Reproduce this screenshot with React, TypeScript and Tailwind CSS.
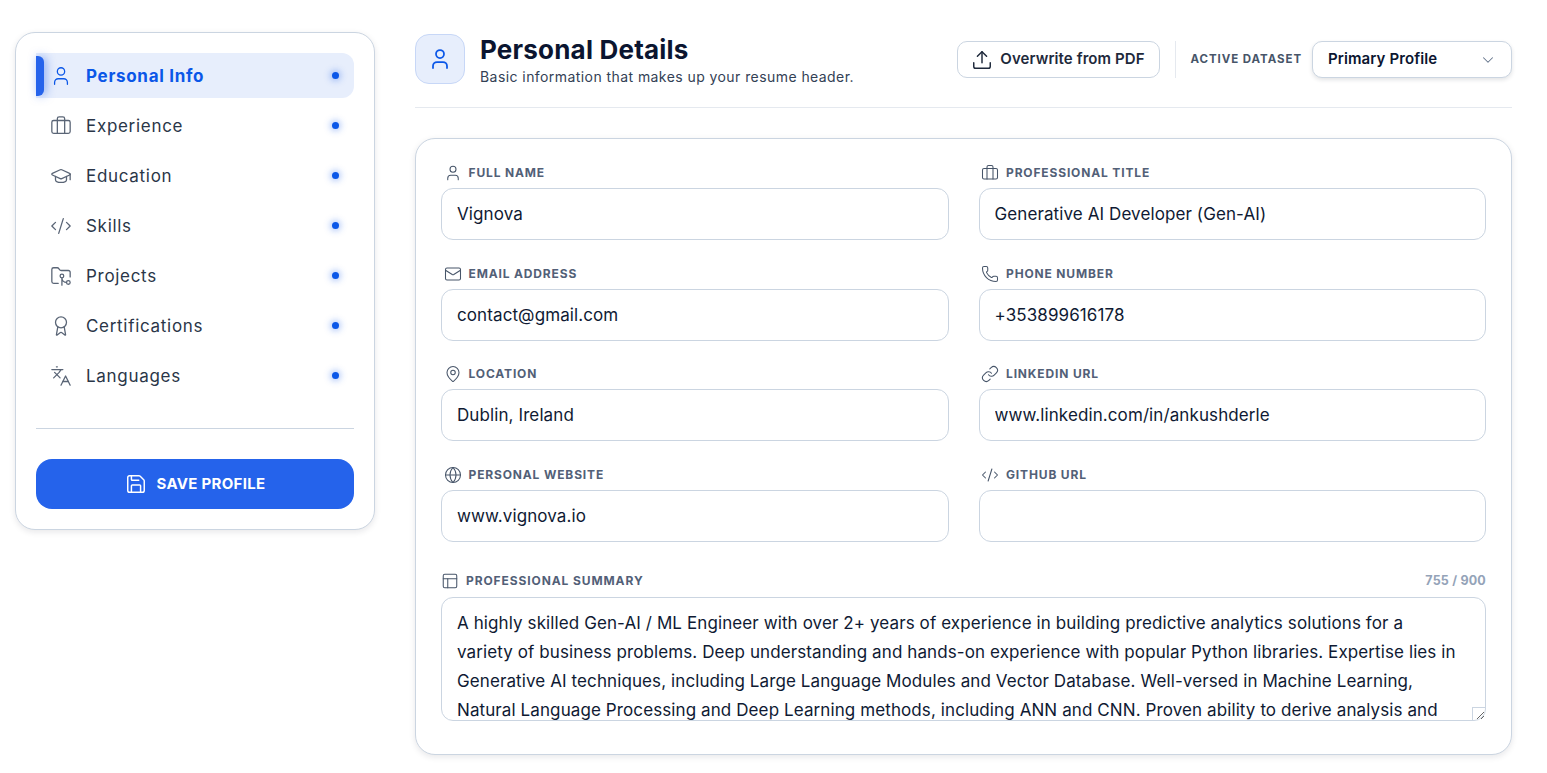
import React from "react";
import {
	Award,
	Briefcase,
	ChevronDown,
	CodeXml,
	FolderGit2,
	Globe,
	GraduationCap,
	Languages,
	Link,
	Mail,
	MapPin,
	PanelsTopLeft,
	Phone,
	Save,
	Upload,
	User,
} from "lucide-react";

const navItems = [
	{ label: "Personal Info", icon: User, active: true },
	{ label: "Experience", icon: Briefcase },
	{ label: "Education", icon: GraduationCap },
	{ label: "Skills", icon: CodeXml },
	{ label: "Projects", icon: FolderGit2 },
	{ label: "Certifications", icon: Award },
	{ label: "Languages", icon: Languages },
];

const fields = [
	{ label: "FULL NAME", icon: User, value: "Vignova" },
	{ label: "PROFESSIONAL TITLE", icon: Briefcase, value: "Generative AI Developer (Gen-AI)" },
	{ label: "EMAIL ADDRESS", icon: Mail, value: "contact@gmail.com" },
	{ label: "PHONE NUMBER", icon: Phone, value: "+353899616178" },
	{ label: "LOCATION", icon: MapPin, value: "Dublin, Ireland" },
	{ label: "LINKEDIN URL", icon: Link, value: "www.linkedin.com/in/ankushderle" },
	{ label: "PERSONAL WEBSITE", icon: Globe, value: "www.vignova.io" },
	{ label: "GITHUB URL", icon: CodeXml, value: "" },
];

const summary =
	"A highly skilled Gen-AI / ML Engineer with over 2+ years of experience in building predictive analytics solutions for a variety of business problems. Deep understanding and hands-on experience with popular Python libraries. Expertise lies in Generative AI techniques, including Large Language Modules and Vector Database. Well-versed in Machine Learning, Natural Language Processing and Deep Learning methods, including ANN and CNN. Proven ability to derive analysis and insights from complex data sets and to communicate results clearly to technical and business stakeholders alike.";

const Sidebar = () => (
	<aside className="w-[360px] shrink-0 self-start rounded-[20px] border border-[#cbd5e1] bg-white p-5 shadow-[0_2px_6px_rgba(15,23,42,0.1)]">
		<nav className="flex flex-col gap-[5px]">
			{navItems.map((item) => {
				const Icon = item.icon;
				return (
					<div
						key={item.label}
						className={`relative flex h-[45px] items-center rounded-r-[12px] pl-[14px] pr-[15px] ${
							item.active ? "bg-[#e7eefc] text-[#0b57e8]" : "text-[#2a3648]"
						}`}
					>
						{item.active && (
							<span className="absolute left-0 top-[3px] h-[40px] w-[8px] rounded-r-[6px] bg-[#2563eb] shadow-[2px_0_10px_rgba(37,99,235,0.5)]" />
						)}
						<Icon
							size={22}
							strokeWidth={1.4}
							className={item.active ? "text-[#0b57e8]" : "text-[#5a6576]"}
						/>
						<span
							className={`ml-[14px] mt-[2px] flex-1 text-[17px] tracking-[0.7px] ${
								item.active ? "font-bold" : "font-normal"
							}`}
						>
							{item.label}
						</span>
						<span className="h-[7px] w-[7px] rounded-full bg-[#0b57e8] shadow-[0_0_6px_2px_rgba(37,99,235,0.35)]" />
					</div>
				);
			})}
		</nav>
		<div className="mt-[30px] border-t border-[#cbd5e1]" />
		<button className="mt-[30px] flex h-[50px] w-full items-center justify-center gap-[10px] rounded-[16px] bg-[#2563eb] text-[15px] font-bold tracking-[0.3px] text-white">
			<Save size={22} strokeWidth={1.6} />
			SAVE PROFILE
		</button>
	</aside>
);

const Header = () => (
	<header className="flex h-[74px] items-start justify-between border-b border-[#e5e9ef]">
		<div className="flex items-start gap-[15px]">
			<div className="flex h-[50px] w-[50px] items-center justify-center rounded-[14px] border border-[#c7d7f7] bg-[#e7eefc] text-[#0b57e8]">
				<User size={24} strokeWidth={1.75} />
			</div>
			<div className="pt-[1px]">
				<h1 className="text-[26px] leading-[30px] font-bold tracking-[0.2px] text-[#0b1530]">
					Personal Details
				</h1>
				<p className="mt-[2px] text-[14px] leading-[20px] tracking-[0.43px] text-[#334155]">
					Basic information that makes up your resume header.
				</p>
			</div>
		</div>
		<div className="mt-[7px] flex items-center">
			<button className="flex h-[37px] w-[203px] items-center justify-center gap-[7px] rounded-[10px] border border-[#cbd5e1] bg-white text-[15px] font-semibold tracking-[0.1px] text-[#1e293b]">
				<Upload size={22} strokeWidth={1.6} />
				Overwrite from PDF
			</button>
			<div className="mx-[15px] h-[37px] border-l border-[#e5e9ef]" />
			<span className="mr-[10px] text-[11.5px] font-bold tracking-[0.93px] text-[#475569]">
				ACTIVE DATASET
			</span>
			<div className="flex h-[37px] w-[200px] items-center justify-between rounded-[10px] border border-[#cbd5e1] bg-white pl-[15px] pr-[14px] shadow-[0_2px_4px_rgba(15,23,42,0.12)]">
				<span className="text-[15px] font-semibold tracking-[0.1px] text-[#0b1530]">
					Primary Profile
				</span>
				<ChevronDown size={18} strokeWidth={1.4} className="text-[#64748b]" />
			</div>
		</div>
	</header>
);

const Field = ({ field }: { field: (typeof fields)[number] }) => {
	const Icon = field.icon;
	return (
		<div>
			<label className="flex h-[20px] items-center gap-[7px] pl-[2.5px] text-[12px] font-bold tracking-[0.85px] text-[#526077]">
				<Icon size={18} strokeWidth={1.4} className="text-[#475569]" />
				{field.label}
			</label>
			<input
				readOnly
				value={field.value}
				className="mt-[5px] h-[52px] w-full rounded-[12px] border border-[#cbd5e1] bg-white px-[15px] text-[17px] tracking-[0.1px] text-[#0f1a33] outline-none"
			/>
		</div>
	);
};

export default function App() {
	return (
		<div className="flex h-[773px] gap-[40px] overflow-hidden bg-white pl-[15px] pr-[35px] pt-[32px] font-['Inter',sans-serif]">
			<Sidebar />
			<main className="flex-1 pt-[2px]">
				<Header />
				<section className="mt-[30px] h-[617px] rounded-[20px] border border-[#cbd5e1] bg-white px-[25px] pt-[24px] shadow-[0_2px_6px_rgba(15,23,42,0.1)]">
					<div className="grid grid-cols-2 gap-x-[30px] gap-y-[23.5px]">
						{fields.map((field) => (
							<Field key={field.label} field={field} />
						))}
					</div>
					<div className="mt-[30.5px] flex h-[18px] items-center justify-between">
						<label className="flex items-center gap-[7px] text-[12px] font-bold tracking-[0.9px] text-[#526077]">
							<PanelsTopLeft size={18} strokeWidth={1.4} className="text-[#475569]" />
							PROFESSIONAL SUMMARY
						</label>
						<span className="text-[12.5px] font-bold tracking-[0.2px] text-[#94a3b8]">755 / 900</span>
					</div>
					<div className="relative mt-[7px]">
						<textarea
							readOnly
							value={summary}
							className="block h-[124px] w-full resize-y overflow-hidden rounded-[12px] border border-[#cbd5e1] bg-white pl-[15px] pr-[28px] pt-[11px] text-[17px] leading-[28.9px] tracking-[0.1px] text-[#0f1a33] outline-none"
						/>
						<span className="pointer-events-none absolute bottom-[1px] right-[1px] h-[13px] w-[13px] border-l border-t border-[#cbd5e1]" />
					</div>
				</section>
			</main>
		</div>
	);
}
